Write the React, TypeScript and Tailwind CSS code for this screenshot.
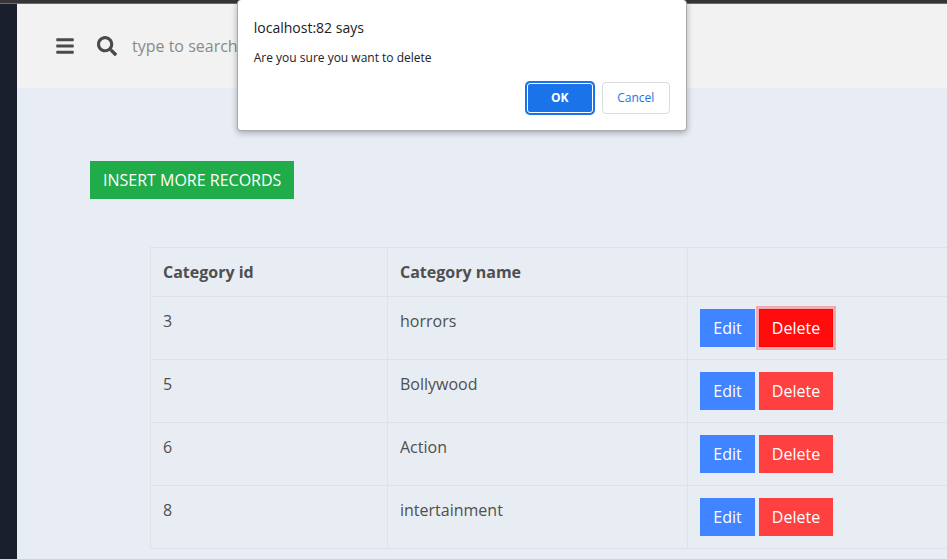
import { FaBars, FaSearch } from "react-icons/fa";

const categories = [
  { id: 3, name: "horrors", pending: true },
  { id: 5, name: "Bollywood", pending: false },
  { id: 6, name: "Action", pending: false },
  { id: 8, name: "intertainment", pending: false },
];

function Header() {
  return (
    <header className="flex h-[84px] items-center bg-[#f2f2f2] pb-px pl-[39px] text-[#4a4a4a]">
      <button type="button" aria-label="Toggle menu" className="flex w-[18px] justify-center">
        <FaBars className="size-5 shrink-0" />
      </button>
      <label htmlFor="search" aria-label="Search" className="ml-[23px]">
        <FaSearch className="size-5" />
      </label>
      <input
        id="search"
        type="text"
        placeholder="type to search"
        className="ml-[15px] w-60 bg-transparent text-base outline-none placeholder:text-[#8a8a8a]"
      />
    </header>
  );
}

function CategoryTable() {
  const cell = "border border-[#dee2e6] p-3 text-left align-top";
  return (
    <table className="w-full min-w-[1000px] table-fixed border-collapse bg-[#e8edf3] text-[#4f4f4f]">
      <colgroup>
        <col className="w-[237px]" />
        <col className="w-[300px]" />
        <col />
      </colgroup>
      <thead>
        <tr>
          <th className={cell}>Category id</th>
          <th className={cell}>Category name</th>
          <th className={cell} aria-label="Actions" />
        </tr>
      </thead>
      <tbody>
        {categories.map((c) => (
          <tr key={c.id}>
            <td className={cell}>{c.id}</td>
            <td className={cell}>{c.name}</td>
            <td className={cell}>
              <div className="flex gap-1 text-white">
                <button type="button" className="h-[38px] w-[55px] bg-[#4084ff]">
                  Edit
                </button>
                <button
                  type="button"
                  className={
                    c.pending
                      ? "h-[38px] w-[74px] border border-[#ff0000] bg-[#ff0d0d] ring-3 ring-[#f5a9ae]"
                      : "h-[38px] w-[74px] bg-[#ff4040]"
                  }
                >
                  Delete
                </button>
              </div>
            </td>
          </tr>
        ))}
      </tbody>
    </table>
  );
}

function ConfirmDialog() {
  return (
    <div
      role="alertdialog"
      aria-labelledby="dialog-title"
      aria-describedby="dialog-message"
      className="absolute top-0 left-1/4 w-[450px] rounded-[4px] border border-t-0 border-[#a9abae] bg-white px-4 pt-[18px] pb-4 text-[#202124] shadow-[0_2px_6px_rgba(0,0,0,0.3)]"
    >
      <h2 id="dialog-title" className="text-sm leading-5">
        localhost:82 says
      </h2>
      <p id="dialog-message" className="mt-2 text-xs leading-6">
        Are you sure you want to delete
      </p>
      <div className="mt-3 flex justify-end gap-2 text-xs">
        <button
          type="button"
          className="h-8 w-[68px] rounded-[4px] bg-[#1a73e8] font-bold text-white ring-1 ring-[#1a73e8] outline-1 -outline-offset-2 outline-white"
        >
          OK
        </button>
        <button
          type="button"
          className="h-8 w-[68px] rounded-[4px] border border-[#dadce0] font-medium text-[#1a73e8]"
        >
          Cancel
        </button>
      </div>
    </div>
  );
}

export default function App() {
  return (
    <div className="relative flex h-screen flex-col overflow-hidden bg-[#e8edf5] font-['Open_Sans','Noto_Sans',sans-serif] text-base">
      <div className="h-1 shrink-0 border-b border-[#6b6b6b] bg-[#353535]" />
      <div className="flex min-h-0 flex-1">
        <aside className="w-[17px] shrink-0 bg-[#191f2c]" />
        <div className="min-w-0 flex-1">
          <Header />
          <main className="pt-[73px] pl-[73px]">
            <button type="button" className="h-[38px] bg-[#20ac48] px-[13px] text-white">
              INSERT MORE RECORDS
            </button>
            <div className="mt-12 pl-[60px]">
              <CategoryTable />
            </div>
          </main>
        </div>
      </div>
      <ConfirmDialog />
    </div>
  );
}
